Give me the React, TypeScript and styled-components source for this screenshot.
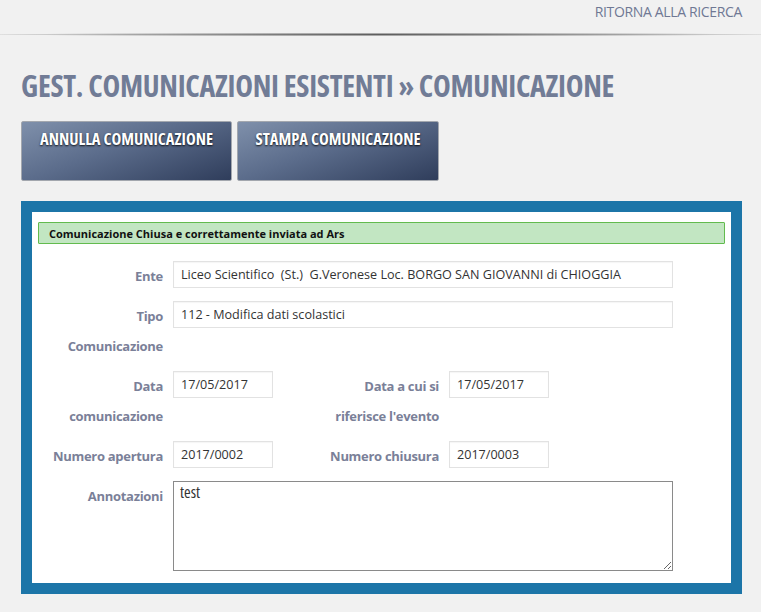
import React from "react";
import styled, { createGlobalStyle } from "styled-components";

const Global = createGlobalStyle`
  html, body { margin: 0; padding: 0; background: #f1f1f1; }
  body { font-family: "Open Sans", "Liberation Sans", sans-serif; }
  * { box-sizing: border-box; }
`;

const Page = styled.div`
  width: 761px;
  min-height: 612px;
  background: #f1f1f1;
`;

const TopBar = styled.div`
  display: flex;
  justify-content: flex-end;
  padding: 2px 19px 0 0;
  height: 33px;
`;

const BackLink = styled.a`
  font-size: 14px;
  font-weight: 400;
  color: #6f7894;
  letter-spacing: -0.35px;
  text-decoration: none;
  line-height: 20px;
`;

const Divider = styled.div`
  height: 3px;
  background: radial-gradient(ellipse at center, rgba(85, 85, 85, 0.95) 0%, rgba(130, 130, 130, 0.7) 45%, rgba(241, 241, 241, 0) 78%);
`;

const Content = styled.div`
  padding: 30px 19px 0 21px;
`;

const Title = styled.h1`
  margin: 0;
  font-family: "Open Sans", sans-serif;
  font-stretch: condensed;
  font-weight: 700;
  font-size: 30px;
  line-height: 40px;
  color: #717c96;
  letter-spacing: -0.3px;
  white-space: nowrap;
`;

const Toolbar = styled.div`
  display: flex;
  gap: 5px;
  margin-top: 15px;
`;

const ActionButton = styled.button<{ $w: number }>`
  width: ${(p) => p.$w}px;
  height: 60px;
  border: 1px solid #a3a7ae;
  border-radius: 2px;
  background: linear-gradient(160deg, #7f90ab 0%, #5b6c8b 45%, #2f3d5b 100%);
  color: #fff;
  font-family: "Open Sans", sans-serif;
  font-stretch: condensed;
  font-weight: 700;
  font-size: 16.5px;
  letter-spacing: 0px;
  text-shadow: 0 1px 2px rgba(0, 0, 0, 0.85);
  padding: 5px 0 0 0;
  display: flex;
  justify-content: center;
  align-items: flex-start;
  cursor: pointer;
`;

const Panel = styled.div`
  margin-top: 20px;
  width: 721px;
  background: #1c75a8;
  padding: 11px;
`;

const Inner = styled.div`
  background: #fff;
  padding: 10px 6px 12px 6px;
`;

const Alert = styled.div`
  background: #c2e6c2;
  border: 1px solid #62bb4e;
  border-radius: 1px;
  padding: 0 10px;
  height: 22px;
  display: flex;
  align-items: center;
  font-size: 11px;
  font-weight: 700;
  color: #111;
`;

const Form = styled.div`
  padding: 17px 0 0 5px;
  display: flex;
  flex-direction: column;
  gap: 10px;
`;

const Row = styled.div`
  display: flex;
  align-items: flex-start;
`;

const Label = styled.label`
  width: 120px;
  flex: none;
  text-align: right;
  font-size: 13px;
  font-weight: 700;
  line-height: 30px;
  margin-right: 10px;
  letter-spacing: -0.3px;
  color: #7a8098;
`;

const Field = styled.div<{ $w: number }>`
  width: ${(p) => p.$w}px;
  height: 27px;
  flex: none;
  border: 1px solid #e2e2e2;
  box-shadow: inset 0 1px 1px rgba(0, 0, 0, 0.04);
  padding: 0 7px;
  display: flex;
  align-items: center;
  font-size: 12.6px;
  color: #333;
  white-space: pre;
`;

const Spacer = styled.div<{ $w: number }>`
  width: ${(p) => p.$w}px;
  flex: none;
`;

const Notes = styled.textarea`
  width: 500px;
  height: 90px;
  flex: none;
  border: 1px solid #8a8a8a;
  padding: 0 6px;
  font-family: "Open Sans", sans-serif;
  font-stretch: condensed;
  font-size: 16px;
  line-height: 20px;
  color: #333;
  resize: both;
  outline: none;
`;

export default function App() {
  return (
    <Page>
      <Global />
      <TopBar>
        <BackLink href="#">RITORNA ALLA RICERCA</BackLink>
      </TopBar>
      <Divider />
      <Content>
        <Title>GEST. COMUNICAZIONI ESISTENTI » COMUNICAZIONE</Title>
        <Toolbar>
          <ActionButton $w={211}>ANNULLA COMUNICAZIONE</ActionButton>
          <ActionButton $w={202}>STAMPA COMUNICAZIONE</ActionButton>
        </Toolbar>
        <Panel>
          <Inner>
            <Alert>Comunicazione Chiusa e correttamente inviata ad Ars</Alert>
            <Form>
              <Row>
                <Label>Ente</Label>
                <Field $w={500}>Liceo Scientifico  (St.)  G.Veronese Loc. BORGO SAN GIOVANNI di CHIOGGIA</Field>
              </Row>
              <Row>
                <Label>Tipo Comunicazione</Label>
                <Field $w={500}>112 - Modifica dati scolastici</Field>
              </Row>
              <Row>
                <Label>Data comunicazione</Label>
                <Field $w={100}>17/05/2017</Field>
                <Spacer $w={46} />
                <Label>Data a cui si riferisce l'evento</Label>
                <Field $w={100}>17/05/2017</Field>
              </Row>
              <Row>
                <Label>Numero apertura</Label>
                <Field $w={100}>2017/0002</Field>
                <Spacer $w={46} />
                <Label>Numero chiusura</Label>
                <Field $w={100}>2017/0003</Field>
              </Row>
              <Row>
                <Label>Annotazioni</Label>
                <Notes defaultValue="test" />
              </Row>
            </Form>
          </Inner>
        </Panel>
      </Content>
    </Page>
  );
}
